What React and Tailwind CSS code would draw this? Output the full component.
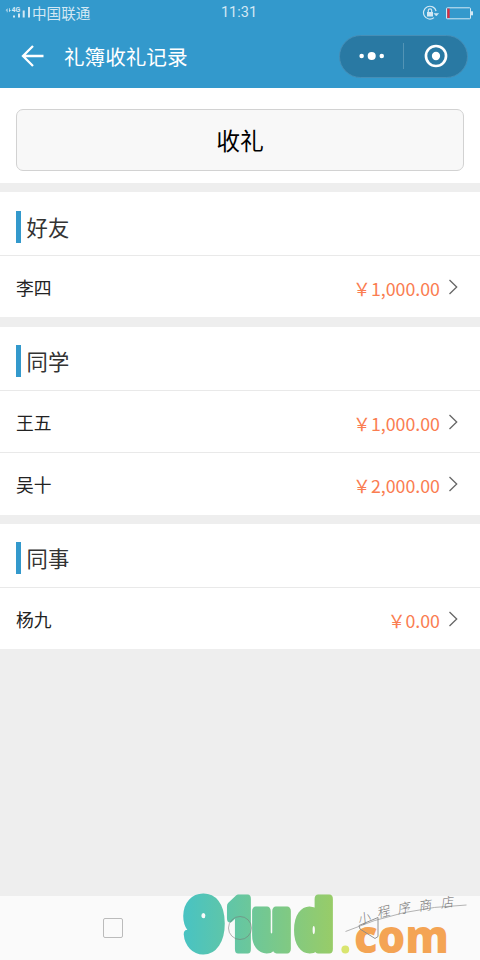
const groups = [
  { title: '好友', rows: [['李四', '￥1,000.00']] },
  { title: '同学', rows: [['王五', '￥1,000.00'], ['吴十', '￥2,000.00']] },
  { title: '同事', rows: [['杨九', '￥0.00']] },
];

function StatusBar() {
  return (
    <div className="flex h-[26px] items-center text-[#d3e8f4]">
      <div className="flex flex-1 items-center pl-[5px]">
        <svg width="27" height="20" viewBox="0 0 27 20" fill="currentColor">
          <path d="M2.5 5.2v4H1.8V7.4H.6L2.5 5.2zM4 9.2v-4h.8V7h1.2L4 9.2z" />
          <text x="6.5" y="9.2" fontSize="7" fontWeight="bold" fontFamily="Roboto, sans-serif">4G</text>
          <path d="M8 12.5h2v2H8zM13 10.5h2v4h-2zM17.7 7.5h2v7h-2zM23 4h2v10.500h-2z" />
        </svg>
        <span className="text-[14.6px] leading-5">中国联通</span>
      </div>
      <span className="font-[Roboto,sans-serif] text-[14.5px] leading-5">11:31</span>
      <div className="flex flex-1 items-center justify-end gap-[6px] pr-[7px]">
        <svg width="18" height="16" viewBox="0 0 18 16" fill="none" stroke="currentColor" strokeWidth="1.2">
          <path d="M14.1 6A6.4 6.4 0 1 0 12 12.600" />
          <path d="M12 8.500h4.500L14.300 11z" fill="currentColor" strokeWidth=".5" />
          <path d="M5 7h6v4.500H5z" fill="currentColor" stroke="none" />
          <path d="M6.300 7V5.500a1.700 1.700 0 0 1 3.400 0V7" />
        </svg>
        <svg width="27" height="13" viewBox="0 0 27 13">
          <rect x=".5" y=".8" width="24" height="11" rx=".8" fill="none" stroke="currentColor" />
          <rect x="1.300" y="1.600" width="2.300" height="9.400" fill="#e22b3c" />
          <rect x="25" y="4.300" width="2" height="4" fill="currentColor" />
        </svg>
      </div>
    </div>
  );
}

function NavBar() {
  return (
    <div className="flex h-[62px] items-center pb-[2px] pl-[21px] pr-[12px] text-white">
      <svg width="24" height="24" viewBox="0 0 24 24" fill="none" stroke="currentColor" strokeWidth="2.300">
        <path d="M12 2 2 12l10 10M2.200 12H22.500" />
      </svg>
      <h1 className="ml-[19px] flex-1 text-[20.6px] leading-7">礼簿收礼记录</h1>
      <div className="flex h-[43px] w-[129px] items-center rounded-full border border-[#468eb6] bg-[#2979a3]">
        <svg className="flex-1" width="64" height="28" viewBox="0 0 64 28" fill="white">
          <circle cx="22" cy="14" r="2.300" />
          <circle cx="32.200" cy="14" r="4.100" />
          <circle cx="42.400" cy="14" r="2.300" />
        </svg>
        <div className="h-[26px] w-px bg-[#5394b5]" />
        <svg className="flex-1" width="64" height="28" viewBox="0 0 64 28">
          <circle cx="32.500" cy="14" r="10.200" fill="none" stroke="white" strokeWidth="2.700" />
          <circle cx="32.500" cy="14" r="4.200" fill="white" />
        </svg>
      </div>
    </div>
  );
}

function Row({ name, amount }) {
  return (
    <div className="flex h-[62.4px] items-center border-t border-[#e9e9e9] px-4">
      <span className="flex-1 text-[17.8px] leading-6 text-[#222]">{name}</span>
      <span className="pt-[2px] text-[17.8px] leading-6 text-[#fa7d51]">{amount}</span>
      <svg className="ml-[8px] mr-[5px]" width="11" height="16" viewBox="0 0 11 16" fill="none" stroke="#666" strokeWidth="1.300">
        <path d="m1.500 1 7.200 7-7.200 7" />
      </svg>
    </div>
  );
}

function Group({ title, rows }) {
  return (
    <section className="bg-white">
      <div className="flex h-[63.100px] items-center px-4 pt-[6px]">
        <div className="h-8 w-[5.300px] bg-[#3399cc]" />
        <h2 className="ml-[5.300px] text-[21.300px] leading-8 text-[#333]">{title}</h2>
      </div>
      {rows.map(([name, amount]) => <Row key={name} name={name} amount={amount} />)}
    </section>
  );
}

function Watermark() {
  return (
    <svg className="absolute left-[180px] top-0" width="300" height="80" viewBox="180 880 300 80">
      <defs>
        <linearGradient id="brand" gradientUnits="userSpaceOnUse" x1="183" y1="0" x2="333" y2="0">
          <stop offset="0" stopColor="#48c3c3" />
          <stop offset="1" stopColor="#98cc68" />
        </linearGradient>
      </defs>
      <g fill="url(#brand)" stroke="url(#brand)" strokeWidth="9" strokeLinejoin="round" fontFamily="Inter, sans-serif" fontWeight="900" fontSize="69">
        <text x="185" y="949" textLength="38" lengthAdjust="spacingAndGlyphs">9</text>
        <text x="228" y="949" textLength="22" lengthAdjust="spacingAndGlyphs">1</text>
        <text x="253" y="949" textLength="37" lengthAdjust="spacingAndGlyphs">u</text>
        <text x="296" y="949" textLength="36" lengthAdjust="spacingAndGlyphs">d</text>
      </g>
      <circle cx="240" cy="928" r="11.500" fill="none" stroke="#777" strokeOpacity=".55" />
      <circle cx="345.300" cy="949.500" r="3.900" fill="#d9e56f" />
      <text x="354" y="953" textLength="95" lengthAdjust="spacingAndGlyphs" fill="#f4a454" fontFamily="Open Sans, sans-serif" fontWeight="800" fontSize="46">com</text>
      <path d="M345.500 931.500Q402 907 466.500 905" fill="none" stroke="#aaa" strokeWidth=".9" />
      <path d="M359 925.500 378 917.500V936.500L375 938.500 360 929z" fill="none" stroke="#888" strokeWidth=".9" />
      <g fill="#777" fontFamily="Noto Sans CJK SC, sans-serif" fontWeight="300" fontSize="13">
        <text transform="translate(359 925) rotate(-18) skewX(-12)">小</text>
        <text transform="translate(378 918) rotate(-14) skewX(-12)">程</text>
        <text transform="translate(398 914) rotate(-11) skewX(-12)">序</text>
        <text transform="translate(419 911) rotate(-8) skewX(-12)">商</text>
        <text transform="translate(441 908) rotate(-8) skewX(-12)">店</text>
      </g>
    </svg>
  );
}

export default function App() {
  return (
    <div className="flex h-[960px] w-[480px] flex-col overflow-hidden bg-[#eee] font-['Noto_Sans_CJK_SC',sans-serif]">
      <header className="h-[88px] shrink-0 bg-[#3399cc]">
        <StatusBar />
        <NavBar />
      </header>
      <main className="flex flex-1 flex-col gap-[9.300px]">
        <div className="h-[94.700px] bg-white px-4 pt-[21px]">
          <button className="h-[62px] w-full rounded-[7px] border border-[#d2d2d2] bg-[#f8f8f8] text-[23.800px] text-black">收礼</button>
        </div>
        {groups.map((g) => <Group key={g.title} {...g} />)}
      </main>
      <footer className="relative h-16 shrink-0 bg-[#fafafa] pl-[103px] pt-[22px]">
        <div className="h-5 w-5 rounded-[2px] border-[1.500px] border-[#bbb]" />
        <div className="absolute -top-4 left-0">
          <Watermark />
        </div>
      </footer>
    </div>
  );
}
